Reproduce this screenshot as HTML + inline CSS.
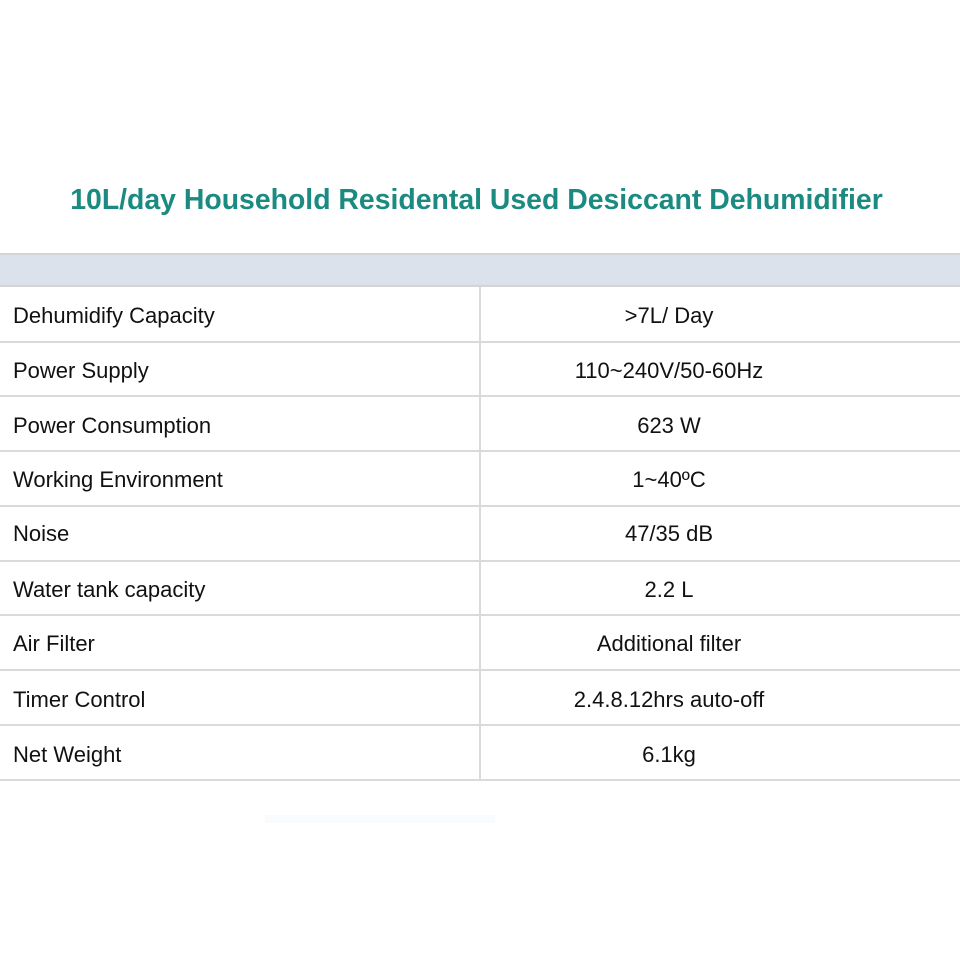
<!DOCTYPE html>
<html><head><meta charset="utf-8"><style>
html,body{margin:0;padding:0;background:#fff;width:960px;height:960px;overflow:hidden;position:relative;font-family:"Liberation Sans",Arial,sans-serif;}
.t{position:absolute;left:0;width:953px;top:183px;text-align:center;font-weight:bold;font-size:28.4px;color:#1b8a80;line-height:34px;}
.band{position:absolute;left:0;width:960px;top:253px;height:34px;background:#dce2ec;border-top:2px solid #d4d4d4;border-bottom:2px solid #d4d4d4;box-sizing:border-box;}
.h{position:absolute;left:0;width:960px;height:2px;background:#dadada;}
.v{position:absolute;left:479px;width:2px;top:287px;height:493px;background:#dadada;}
.l{position:absolute;left:13px;font-size:22px;color:#111;line-height:24px;}
.r{position:absolute;left:481px;width:376px;text-align:center;font-size:22px;color:#111;line-height:24px;}
.smudge{position:absolute;left:265px;top:815px;width:230px;height:8px;background:#fafbfd;}
</style></head><body>
<div class="t">10L/day Household Residental Used Desiccant Dehumidifier</div>
<div class="band"></div>
<div class="v"></div>
<div class="h" style="top:341px"></div>
<div class="h" style="top:395px"></div>
<div class="h" style="top:450px"></div>
<div class="h" style="top:505px"></div>
<div class="h" style="top:560px"></div>
<div class="h" style="top:614px"></div>
<div class="h" style="top:669px"></div>
<div class="h" style="top:724px"></div>
<div class="h" style="top:779px"></div>

<div class="l" style="top:304px">Dehumidify Capacity</div><div class="r" style="top:304px">&gt;7L/ Day</div>
<div class="l" style="top:359px">Power Supply</div><div class="r" style="top:359px">110~240V/50-60Hz</div>
<div class="l" style="top:414px">Power Consumption</div><div class="r" style="top:414px">623 W</div>
<div class="l" style="top:468px">Working Environment</div><div class="r" style="top:468px">1~40ºC</div>
<div class="l" style="top:522px">Noise</div><div class="r" style="top:522px">47/35 dB</div>
<div class="l" style="top:578px">Water tank capacity</div><div class="r" style="top:578px">2.2 L</div>
<div class="l" style="top:632px">Air Filter</div><div class="r" style="top:632px">Additional filter</div>
<div class="l" style="top:688px">Timer Control</div><div class="r" style="top:688px">2.4.8.12hrs auto-off</div>
<div class="l" style="top:743px">Net Weight</div><div class="r" style="top:743px">6.1kg</div>
<div class="smudge"></div>
</body></html>
